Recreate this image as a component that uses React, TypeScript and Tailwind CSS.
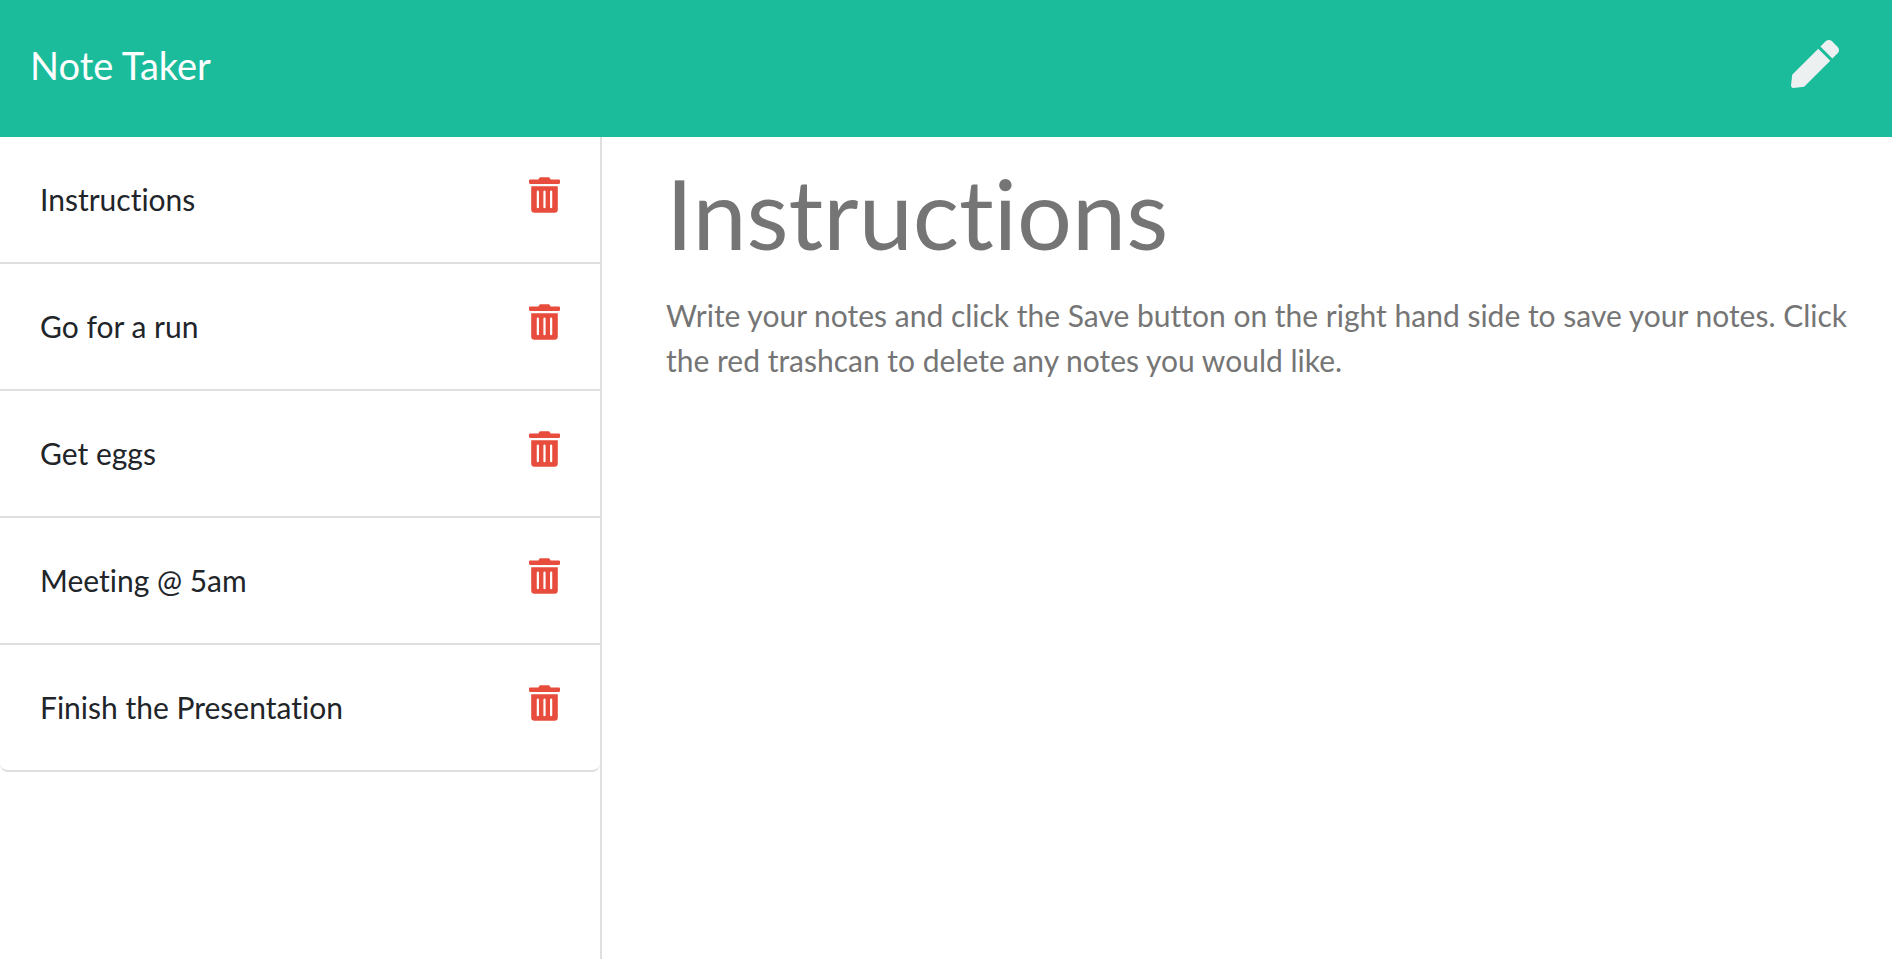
import { FaPen, FaTrashAlt } from "react-icons/fa";

const notes = [
  "Instructions",
  "Go for a run",
  "Get eggs",
  "Meeting @ 5am",
  "Finish the Presentation",
];

const title = "Instructions";
const body =
  "Write your notes and click the Save button on the right hand side to save your notes. Click the red trashcan to delete any notes you would like.";

function Header() {
  return (
    <header className="flex h-[137px] items-start justify-between bg-[#1abc9c] pr-[53px] pl-[30px]">
      <a href="#" className="pt-9 text-[38px] leading-[58px] text-white">
        Note Taker
      </a>
      <button type="button" aria-label="New note" className="mt-10 text-[48px] text-[#ecf0f1]">
        <FaPen />
      </button>
    </header>
  );
}

function NoteList() {
  return (
    <aside className="w-[602px] shrink-0 border-r-2 border-[#dfdfdf]">
      <ul>
        {notes.map((note) => (
          <li
            key={note}
            className="flex items-start justify-between border-b-2 border-[#dfdfdf] px-10 py-10 last:rounded-b-lg"
          >
            <button type="button" className="text-left text-[#212529]">
              {note}
            </button>
            <button type="button" aria-label={`Delete ${note}`} className="text-[#e74c3c]">
              <FaTrashAlt className="h-9 w-[31px]" />
            </button>
          </li>
        ))}
      </ul>
    </aside>
  );
}

function NoteEditor() {
  return (
    <main className="flex min-w-0 flex-1 flex-col gap-[23px] pt-[18px] pr-8 pl-16 text-[#757575]">
      <input
        type="text"
        aria-label="Note title"
        defaultValue={title}
        className="h-[115px] w-full text-[97px] leading-[115px] [font-variant-ligatures:none] outline-none"
      />
      <textarea
        aria-label="Note text"
        defaultValue={body}
        className="w-full flex-1 resize-none overflow-hidden [font-variant-ligatures:none] outline-none"
      />
    </main>
  );
}

export default function App() {
  return (
    <div className="flex min-h-screen flex-col bg-white font-[Lato,sans-serif] text-[30px] leading-[45px] [font-variant-ligatures:none]">
      <Header />
      <div className="flex flex-1">
        <NoteList />
        <NoteEditor />
      </div>
    </div>
  );
}
